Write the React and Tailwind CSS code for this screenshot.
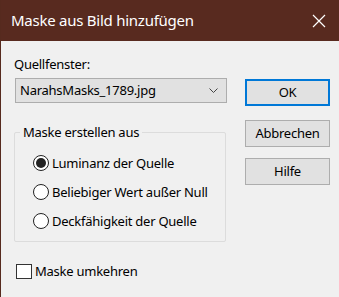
export default function App() {
  const font = { fontFamily: '"Noto Sans", "Open Sans", sans-serif' }
  const radios = [
    { label: 'Luminanz der Quelle', checked: true },
    { label: 'Beliebiger Wert außer Null', checked: false },
    { label: 'Deckfähigkeit der Quelle', checked: false },
  ]

  return (
    <div className="w-[339px] h-[297px] bg-[#f0f0f0] border-l border-[#562a1e] flex flex-col overflow-hidden text-[#000] tracking-[-0.25px]" style={font}>
      <div className="h-[41px] shrink-0 bg-[#582a1f] flex items-center justify-between pl-[10px] pr-[13px]">
        <span className="text-white text-[15px] leading-none">Maske aus Bild hinzufügen</span>
        <svg width="14" height="14" viewBox="0 0 14 14">
          <path d="M1 1 L13 13 M13 1 L1 13" stroke="#fff" strokeWidth="1.2" />
        </svg>
      </div>

      <div className="flex flex-1">
        <div className="w-[227px] pl-[13px] flex flex-col">
          <div className="mt-[14px] text-[13px] leading-[18px]">Quellfenster:</div>
          <div className="mt-[5px] ml-[1px] h-[25px] w-[212px] bg-[#e1e1e1] border border-[#adadad] flex items-center justify-between pl-[4px] pr-[8px]">
            <span className="text-[13px] leading-none">NarahsMasks_1789.jpg</span>
            <svg width="9" height="6" viewBox="0 0 9 6">
              <path d="M0.5 0.5 L4.5 4.5 L8.5 0.5" stroke="#444" strokeWidth="1" fill="none" />
            </svg>
          </div>

          <div className="relative mt-[29px] h-[110px] w-[212px] border border-[#dcdcdc] rounded-[2px]">
            <span className="absolute -top-[10px] left-[5px] px-[3px] bg-[#f0f0f0] text-[13px] leading-[18px]">Maske erstellen aus</span>
            <div className="flex flex-col gap-[11px] pt-[21px] pl-[18px]">
              {radios.map((r) => (
                <div key={r.label} className="flex items-center h-[18px]">
                  <span className="w-[16px] h-[16px] rounded-full border-[1.3px] border-[#222] bg-white flex items-center justify-center shrink-0">
                    {r.checked && <span className="w-[10px] h-[10px] rounded-full bg-[#222]" />}
                  </span>
                  <span className="ml-[3px] text-[13px] leading-none">{r.label}</span>
                </div>
              ))}
            </div>
          </div>

          <div className="mt-[22px] ml-[2px] flex items-center">
            <span className="w-[16px] h-[15px] border border-[#333] bg-white shrink-0" />
            <span className="ml-[3px] text-[13px] leading-none">Maske umkehren</span>
          </div>
        </div>

        <div className="ml-[17px] flex flex-col mt-[38px]">
          <button className="w-[85px] h-[27px] bg-[#e1e1e1] border-2 border-[#0078d7] text-[13px]">OK</button>
          <button className="mt-[14px] w-[85px] h-[27px] bg-[#e1e1e1] border border-[#adadad] text-[13px]">Abbrechen</button>
          <button className="mt-[11px] w-[85px] h-[27px] bg-[#e1e1e1] border border-[#adadad] text-[13px]">Hilfe</button>
        </div>
      </div>
    </div>
  )
}
